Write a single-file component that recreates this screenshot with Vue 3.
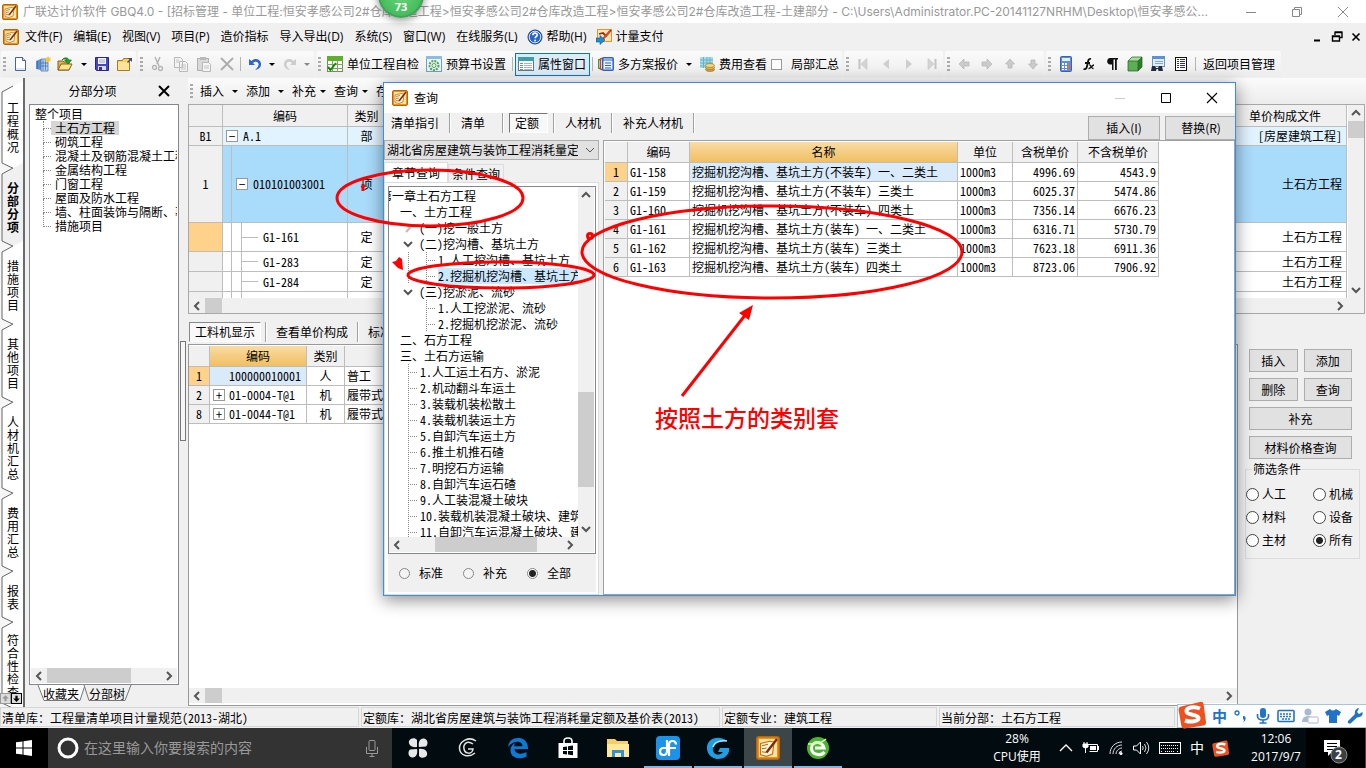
<script setup>
import { ref } from 'vue'

const menus = ['文件(F)', '编辑(E)', '视图(V)', '项目(P)', '造价指标', '导入导出(D)', '系统(S)', '窗口(W)', '在线服务(L)']

const sideTabs = [
  { t: '工程概况', h: 82 },
  { t: '分部分项', h: 78, on: true },
  { t: '措施项目', h: 78 },
  { t: '其他项目', h: 78 },
  { t: '人材机汇总', h: 91 },
  { t: '费用汇总', h: 78 },
  { t: '报表', h: 51 },
  { t: '符合性检查', h: 86 }
]

const projectTree = ['土石方工程', '砌筑工程', '混凝土及钢筋混凝土工程', '金属结构工程', '门窗工程', '屋面及防水工程', '墙、柱面装饰与隔断、幕墙', '措施项目']

const quotaItems = [
  { c: 'G1-161', k: 'tall', cur: true },
  { c: 'G1-283', k: 'mid' },
  { c: 'G1-284', k: 'mid' }
]

const resources = [
  { n: 1, code: '100000010001', kind: '人', name: '普工', sel: true },
  { n: 2, code: '01-0004-T@1', kind: '机', name: '履带式单斗挖掘机', plus: true },
  { n: 8, code: '01-0044-T@1', kind: '机', name: '履带式推土机', plus: true }
]

const chapterTree = [
  { l: 'root', t: '第一章土石方工程' },
  { l: 'sec', t: '一、土方工程' },
  { l: 'sub', t: '(一)挖一般土方', a: 'closed' },
  { l: 'sub', t: '(二)挖沟槽、基坑土方', a: 'open' },
  { l: 'leaf2', t: '1.人工挖沟槽、基坑土方' },
  { l: 'leaf2', t: '2.挖掘机挖沟槽、基坑土方', sel: true },
  { l: 'sub', t: '(三)挖淤泥、流砂', a: 'open' },
  { l: 'leaf2', t: '1.人工挖淤泥、流砂', last: true },
  { l: 'leaf2', t: '2.挖掘机挖淤泥、流砂', last: true },
  { l: 'sec', t: '二、石方工程' },
  { l: 'sec', t: '三、土石方运输' },
  { l: 'leaf1', t: '1.人工运土石方、淤泥' },
  { l: 'leaf1', t: '2.机动翻斗车运土' },
  { l: 'leaf1', t: '3.装载机装松散土' },
  { l: 'leaf1', t: '4.装载机装运土方' },
  { l: 'leaf1', t: '5.自卸汽车运土方' },
  { l: 'leaf1', t: '6.推土机推石碴' },
  { l: 'leaf1', t: '7.明挖石方运输' },
  { l: 'leaf1', t: '8.自卸汽车运石碴' },
  { l: 'leaf1', t: '9.人工装混凝土破块' },
  { l: 'leaf1', t: '10.装载机装混凝土破块、建筑垃圾' },
  { l: 'leaf1', t: '11.自卸汽车运混凝土破块、建筑垃圾' }
]

const quotas = [
  ['G1-158', '挖掘机挖沟槽、基坑土方(不装车) 一、二类土', '4996.69', '4543.9'],
  ['G1-159', '挖掘机挖沟槽、基坑土方(不装车) 三类土', '6025.37', '5474.86'],
  ['G1-160', '挖掘机挖沟槽、基坑土方(不装车) 四类土', '7356.14', '6676.23'],
  ['G1-161', '挖掘机挖沟槽、基坑土方(装车) 一、二类土', '6316.71', '5730.79'],
  ['G1-162', '挖掘机挖沟槽、基坑土方(装车) 三类土', '7623.18', '6911.36'],
  ['G1-163', '挖掘机挖沟槽、基坑土方(装车) 四类土', '8723.06', '7906.92']
]

const filters = ['人工', '机械', '材料', '设备', '主材', '所有']
const filter = ref('所有')
const source = ref('全部')
const partial = ref(false)
</script>

<template>
  <div class="screen">
    <svg class="defs" width="0" height="0" aria-hidden="true">
      <symbol id="gbq" viewBox="0 0 16 16"><rect x=".5" y=".5" width="15" height="15" rx="1.5" fill="#e8921c" stroke="#b8640a" /><rect x="2" y="2" width="12" height="12" fill="#fbe3a0" /><path d="M3 5l6-1.500 3 .5-1 8-4 1.500-4-1z" fill="#fff6dc" stroke="#c87310" stroke-width=".8" /><path d="M4 6.500l4-1M4 8.500l3-.5M4 10.500l3 .5" stroke="#b46a10" stroke-width=".8" /><path d="M14 2L7 11" stroke="#7c2d08" stroke-width="1.600" /></symbol>
      <symbol id="new" viewBox="0 0 16 16"><path d="M3.500 1.500h7l3 3v10h-10z" fill="#fff" stroke="#4a6588" /><path d="M10.500 1.500v3h3" fill="#d5e2f2" stroke="#4a6588" /><path d="M4 12h9v2H4z" fill="#d9e8fa" /></symbol>
      <symbol id="book" viewBox="0 0 16 16"><path d="M1 5l5-2v11l-5-1z" fill="#5b8fcf" /><path d="M6 3h7v12H6z" fill="#b8d4f2" stroke="#3e6ba5" stroke-width=".7" /><path d="M8 4v10M10.500 4v10M6 7h7M6 10h7M2.500 5v8" stroke="#3e6ba5" stroke-width=".7" /><path d="M13 0l1 2 2-.5-1 2 1 2-2-.5-1 2-1-2-2 .5 1-2-1-2 2 .5z" fill="#fbc52c" /></symbol>
      <symbol id="open" viewBox="0 0 16 16"><path d="M1 5h5l1 1h5v8H1z" fill="#e0b54a" stroke="#80611a" /><path d="M1 14l3-6h11l-3 6z" fill="#ffe28a" stroke="#80611a" /><path d="M5 4c2-3 6-3 7 0h2.500L11 8 7.500 4H10C9 2.500 7 2.500 5 4z" fill="#25a12b" stroke="#0e6a14" stroke-width=".6" /></symbol>
      <symbol id="save" viewBox="0 0 16 16"><path d="M1.500 1.500h13v13h-12l-1-1z" fill="#4747c0" stroke="#28287c" /><path d="M4 2h8v6H4z" fill="#f3f5ff" /><path d="M5 4h6M5 6h6" stroke="#a7aad8" /><path d="M4 10h8v4H4z" fill="#d9dcf4" /><path d="M5 11h3v3H5z" fill="#33339a" /></symbol>
      <symbol id="folder" viewBox="0 0 16 16"><path d="M.5 4.500h5l1-2h6v12H.5z" fill="#f4cf6e" stroke="#a57c24" /><path d="M1 6h11v8H1z" fill="#fce39a" /><path d="M11 2h4v4l-1.500-1.500L11 7l-1-1 2.500-2.500z" fill="#39507a" /></symbol>
      <symbol id="cut" viewBox="0 0 16 16"><path d="M5 1l4 9M10 1L7 8" stroke="#b4b4b4" stroke-width="1.500" fill="none" /><circle cx="4.500" cy="11.500" r="2" fill="none" stroke="#b4b4b4" stroke-width="1.300" /><circle cx="10.500" cy="12.500" r="2" fill="none" stroke="#b4b4b4" stroke-width="1.300" /></symbol>
      <symbol id="copy" viewBox="0 0 16 16"><path d="M1.500 1.500h6l2 2v8h-8zM6.500 5.500h6l2 2v8h-8z" fill="#f3f3f3" stroke="#b8b8b8" /><path d="M8 9h5M8 11h5M8 13h5M3 4h3M3 6h3" stroke="#c4c4c4" /></symbol>
      <symbol id="paste" viewBox="0 0 16 16"><rect x="1.500" y="2.500" width="11" height="12" fill="#d9d9d9" stroke="#b1b1b1" /><rect x="4" y="1" width="6" height="3" fill="#b9b9b9" /><path d="M6.500 6.500h6l2 2v7h-8z" fill="#f5f5f5" stroke="#b8b8b8" /><path d="M8 10h5M8 12h5" stroke="#c4c4c4" /></symbol>
      <symbol id="del" viewBox="0 0 16 16"><path d="M2 2l12 12M14 2L2 14" stroke="#acacac" stroke-width="1.800" /></symbol>
      <symbol id="undo" viewBox="0 0 16 16"><path d="M2 3v6h6L6 7c3-2.500 6-.5 5.500 2S9 13 8 14c4-.5 6.500-3.500 6-6.500C13.300 3 8 1.500 4.500 5z" fill="#2f66cf" /></symbol>
      <symbol id="redo" viewBox="0 0 16 16"><path d="M14 3v6H8l2-2c-3-2.500-6-.5-5.500 2S7 13 8 14c-4-.5-6.500-3.500-6-6.500C2.700 3 8 1.500 11.500 5z" fill="#cdcdcd" /></symbol>
      <symbol id="check" viewBox="0 0 16 16"><rect x=".5" y=".5" width="15" height="15" fill="#fff" stroke="#6c8f4c" /><path d="M0 0h16v5H0z" fill="#5fae2d" /><path d="M5.500 5v11M10.500 5v11M0 8.500h16M0 12.500h16" stroke="#7aa85c" /><path d="M1 11l2.500 3L9 7" fill="none" stroke="#17860e" stroke-width="2" /></symbol>
      <symbol id="gear" viewBox="0 0 16 16"><rect x=".5" y=".5" width="15" height="15" fill="#e9f4ee" stroke="#6f9fc9" /><path d="M0 0h16v3H0z" fill="#8fbbe0" /><circle cx="8" cy="9.500" r="4.500" fill="none" stroke="#51a35c" stroke-width="2" stroke-dasharray="2 1" /><circle cx="8" cy="9.500" r="2" fill="none" stroke="#51a35c" /></symbol>
      <symbol id="prop" viewBox="0 0 16 16"><rect x=".5" y="1.500" width="15" height="13" fill="#fff" stroke="#5b7b86" /><path d="M0 1h16v4H0z" fill="#3ba1a8" /><path d="M2 7.500h3M2 9.500h3M2 11.500h3M2 13.500h3" stroke="#6a9d6c" /><path d="M6 7.500h8M6 9.500h8M6 11.500h8M6 13.500h8" stroke="#a9b6b9" /></symbol>
      <symbol id="multi" viewBox="0 0 16 16"><rect x=".5" y="3.500" width="6" height="9" rx="1" fill="#fff" stroke="#2f9b3b" stroke-width="1.500" /><rect x="2.500" y="2.500" width="6" height="11" rx="1" fill="#fff" stroke="#d23d2a" stroke-width="1.500" /><rect x="4.700" y="1.700" width="10.500" height="12.500" rx="1" fill="#eef4ff" stroke="#2c62c4" stroke-width="1.500" /><path d="M5 4h10M7 7h6M7 9.500h6M7 12h6" stroke="#2c62c4" stroke-width="1.200" /></symbol>
      <symbol id="cost" viewBox="0 0 16 16"><path d="M1 1h13v11H1z" fill="#a8dce8" /><path d="M1 4h13M1 7h13M1 10h13M4.500 1v11M8 1v11M11 1v11" stroke="#63b3cb" /><ellipse cx="11" cy="13.500" rx="4.500" ry="2" fill="#d9a53c" stroke="#966b18" stroke-width=".6" /><ellipse cx="11" cy="11.500" rx="4.500" ry="2" fill="#e7ba56" stroke="#966b18" stroke-width=".6" /><ellipse cx="11" cy="9.500" rx="4.500" ry="2" fill="#f4d583" stroke="#966b18" stroke-width=".6" /></symbol>
      <symbol id="first" viewBox="0 0 16 16"><path d="M4.500 3v10" stroke="#c3c3c3" stroke-width="2" /><path d="M12 2.500v11L6 8z" fill="#d4d4d4" stroke="#c3c3c3" stroke-width=".6" /></symbol>
      <symbol id="prev" viewBox="0 0 16 16"><path d="M11 3v10L5 8z" fill="#cecece" /></symbol>
      <symbol id="next" viewBox="0 0 16 16"><path d="M5 3v10l6-5z" fill="#cecece" /></symbol>
      <symbol id="last" viewBox="0 0 16 16"><path d="M11.500 3v10" stroke="#c3c3c3" stroke-width="2" /><path d="M4 2.500v11L10 8z" fill="#d4d4d4" stroke="#c3c3c3" stroke-width=".6" /></symbol>
      <symbol id="left" viewBox="0 0 16 16"><path d="M3 8l5-5v3h5v4H8v3z" fill="#cbcbcb" stroke="#b3b3b3" stroke-width=".7" /></symbol>
      <symbol id="right" viewBox="0 0 16 16"><path d="M13 8L8 3v3H3v4h5v3z" fill="#cbcbcb" stroke="#b3b3b3" stroke-width=".7" /></symbol>
      <symbol id="up" viewBox="0 0 16 16"><path d="M8 3l4.500 5H10v4H6V8H3.500z" fill="#cbcbcb" stroke="#b3b3b3" stroke-width=".7" /></symbol>
      <symbol id="down" viewBox="0 0 16 16"><path d="M8 13l4.500-5H10V4H6v4H3.500z" fill="#cbcbcb" stroke="#b3b3b3" stroke-width=".7" /></symbol>
      <symbol id="calc" viewBox="0 0 16 16"><rect x="2.500" y=".5" width="11" height="15" rx="1" fill="#5f8ddb" stroke="#3c62aa" /><rect x="4" y="2" width="8" height="3" fill="#d7f1f5" /><path d="M4 7h2v2H4zM7 7h2v2H7zM4 10h2v2H4zM7 10h2v2H7zM4 13h2v1H4zM7 13h2v1H7z" fill="#fff" /><path d="M10 7h2v2h-2zM10 10h2v2h-2zM10 13h2v1h-2z" fill="#e46a4c" /></symbol>
      <symbol id="fx" viewBox="0 0 16 16"><path d="M10 3C7.500 2 7 5 6.500 8s-1 6-4 5M4 7h5" fill="none" stroke="#111" stroke-width="1.800" /><path d="M8 9c2-1 2 4 4.500 3.500M13 9c-2 0-3.500 4-5.500 3.500" fill="none" stroke="#111" stroke-width="1.400" /></symbol>
      <symbol id="para" viewBox="0 0 16 16"><path d="M6 2h8v1.500h-1.200V14H11V3.500H9.500V14H8V8.500C4 9 3 6.500 3.200 5 3.500 3 4.500 2 6 2z" fill="#111" /></symbol>
      <symbol id="cube" viewBox="0 0 16 16"><path d="M1 5l4-4h10l-4 4z" fill="#a7dc9d" /><path d="M1 5h10v10H1z" fill="#5bb054" /><path d="M11 5l4-4v10l-4 4z" fill="#2d7d2c" /><path d="M1 5l4-4h10v10l-4 4H1zM1 5h10v10M11 5l4-4" fill="none" stroke="#235f22" stroke-width=".7" /></symbol>
      <symbol id="find" viewBox="0 0 16 16"><rect x="2.500" y=".5" width="12" height="10" fill="#e4eefb" stroke="#6d94cf" /><path d="M2 0h13v3H2z" fill="#5d8fde" /><path d="M5 5.500h8M5 7.500h8" stroke="#86a6d4" /><path d="M1 15l1-5h3l1 2h2l1-2h3l1 5H8.500l-.5-2H6.500L6 15z" fill="#232c3a" /></symbol>
      <symbol id="list" viewBox="0 0 16 16"><rect x="2.500" y="1.500" width="11" height="13" fill="#fff" stroke="#111" /><path d="M4 3.500h2M4 5.500h2M4 7.500h2M4 9.500h2M4 11.500h2M7 3.500h5M7 5.500h5M7 7.500h5M7 9.500h5M7 11.500h5" stroke="#2b2b8b" /></symbol>
      <symbol id="help" viewBox="0 0 16 16"><circle cx="8" cy="8" r="7" fill="#2766d2" stroke="#143f92" /><circle cx="8" cy="8" r="5.800" fill="none" stroke="#dce9fc" /><path d="M5.800 6.300c0-3 4.500-2.800 4.500-.3 0 1.500-2.200 1.500-2.200 3.200" fill="none" stroke="#fff" stroke-width="1.600" /><circle cx="8.100" cy="11.500" r="1" fill="#fff" /></symbol>
      <symbol id="meter" viewBox="0 0 16 16"><rect x="1.500" y=".5" width="14" height="12" fill="#fbe5b8" stroke="#e6942a" /><path d="M3 5l4-1 3 3 5-6" fill="none" stroke="#8e2c17" stroke-width="1.800" /><path d="M7 10l7-8" stroke="#d94a28" stroke-width="2" /><path d="M0 9h4V6.500l5 4.500-5 4.500V13H0z" fill="#1a8fd4" stroke="#0c5c92" stroke-width=".6" /></symbol>
      <symbol id="caretL" viewBox="0 0 16 16"><path d="M10 4L6 8l4 4" fill="none" stroke="#555" stroke-width="2" /></symbol>
      <symbol id="caretR" viewBox="0 0 16 16"><path d="M6 4l4 4-4 4" fill="none" stroke="#555" stroke-width="2" /></symbol>
      <symbol id="caretU" viewBox="0 0 16 16"><path d="M4 10l4-4 4 4" fill="none" stroke="#555" stroke-width="2" /></symbol>
      <symbol id="caretD" viewBox="0 0 16 16"><path d="M4 6l4 4 4-4" fill="none" stroke="#555" stroke-width="2" /></symbol>
      <symbol id="sogou" viewBox="0 0 28 28"><path d="M3 5.500L22 1q3-.7 3.600 2.200L28 21q.4 3-2.600 3.500L7 27.600q-3 .4-3.600-2.600L.6 9q-.4-2.800 2.400-3.500z" fill="#f0501e" /><path d="M22 7.500C16 4.800 8 6.500 8.500 10.500c.4 4 11.500 2.500 12 6.500.4 3.500-8 4.500-13.500 2.500" fill="none" stroke="#fff" stroke-width="4" /></symbol>
    </svg>

    <header class="titlebar">
      <svg class="ic"><use href="#gbq" /></svg>
      <span class="caption">广联达计价软件 GBQ4.0 - [招标管理 - 单位工程:恒安孝感公司2#仓库改造工程&gt;恒安孝感公司2#仓库改造工程&gt;恒安孝感公司2#仓库改造工程-土建部分 - C:\Users\Administrator.PC-20141127NRHM\Desktop\恒安孝感公...</span>
      <div class="winbtns">
        <button aria-label="最小化"><svg class="ic"><path d="M3 8.500h10" stroke="#888" /></svg></button>
        <button aria-label="还原"><svg class="ic"><path d="M3.500 5.500h7v7h-7zM5.500 5.500v-2h7v7h-2" fill="none" stroke="#888" /></svg></button>
        <button aria-label="关闭"><svg class="ic"><path d="M3 3l10 10M13 3L3 13" stroke="#888" /></svg></button>
      </div>
    </header>

    <nav class="menubar">
      <svg class="ic"><use href="#gbq" /></svg>
      <button v-for="m in menus" :key="m">{{ m }}</button>
      <button class="wi"><svg class="ic"><use href="#help" /></svg>帮助(H)</button>
      <button class="wi"><svg class="ic"><use href="#meter" /></svg>计量支付</button>
      <div class="mdi">
        <svg class="ic"><path d="M4 11.500h6" stroke="#000" stroke-width="2" /></svg>
        <svg class="ic"><path d="M6 3.500h7v5h-3M6 3v3M5.500 3h8" fill="none" stroke="#000" stroke-width="1.400" /><path d="M3.500 7h7v5h-7zM3.500 7.500h7" fill="none" stroke="#000" stroke-width="1.400" /></svg>
        <svg class="ic"><path d="M4.500 4.500l7 7M11.500 4.500l-7 7" stroke="#000" stroke-width="1.600" /></svg>
      </div>
    </nav>

    <div class="toolbars">
      <div class="tb tb1"><i class="grip"></i>
        <button aria-label="新建"><svg class="ic"><use href="#new" /></svg></button>
        <button aria-label="新建项目"><svg class="ic"><use href="#book" /></svg></button>
        <button aria-label="打开"><svg class="ic"><use href="#open" /></svg></button><i class="dd"></i>
        <button aria-label="保存"><svg class="ic"><use href="#save" /></svg></button>
        <button aria-label="目录"><svg class="ic"><use href="#folder" /></svg></button>
      </div>
      <div class="tb tb2"><i class="grip"></i>
        <button aria-label="剪切"><svg class="ic"><use href="#cut" /></svg></button>
        <button aria-label="复制"><svg class="ic"><use href="#copy" /></svg></button>
        <button aria-label="粘贴"><svg class="ic"><use href="#paste" /></svg></button>
        <button aria-label="删除"><svg class="ic"><use href="#del" /></svg></button><i class="bar"></i>
        <button aria-label="撤销"><svg class="ic"><use href="#undo" /></svg></button><i class="dd"></i>
        <button aria-label="恢复"><svg class="ic"><use href="#redo" /></svg></button><i class="dd dim"></i>
      </div>
      <div class="tb tb3"><i class="grip"></i>
        <button class="txt"><svg class="ic"><use href="#check" /></svg>单位工程自检</button>
        <button class="txt"><svg class="ic"><use href="#gear" /></svg>预算书设置</button><i class="bar"></i>
        <button class="txt on"><svg class="ic"><use href="#prop" /></svg>属性窗口</button><i class="bar"></i>
        <button class="txt"><svg class="ic"><use href="#multi" /></svg>多方案报价</button><i class="dd"></i>
        <button class="txt"><svg class="ic"><use href="#cost" /></svg>费用查看</button>
        <label class="chk"><input v-model="partial" type="checkbox" />局部汇总</label>
      </div>
      <div class="tb tb4"><i class="grip"></i>
        <button v-for="i in ['first', 'prev', 'next', 'last']" :key="i" :aria-label="i"><svg class="ic"><use :href="'#' + i" /></svg></button>
      </div>
      <div class="tb tb4"><i class="grip"></i>
        <button v-for="i in ['left', 'right', 'up', 'down']" :key="i" :aria-label="i"><svg class="ic"><use :href="'#' + i" /></svg></button>
      </div>
      <div class="tb tb6"><i class="grip"></i>
        <button v-for="i in ['calc', 'fx', 'para', 'cube', 'find', 'list']" :key="i" :aria-label="i"><svg class="ic"><use :href="'#' + i" /></svg></button>
        <i class="bar"></i><button class="txt">返回项目管理</button>
      </div>
    </div>

    <main class="work">
      <aside class="sidetabs">
        <button v-for="s in sideTabs" :key="s.t" :class="{ on: s.on }" :style="{ height: s.h + 'px' }">
          <svg class="shape" width="24" :height="s.h">
            <path :d="`M23 -5L2 6V${s.h - 5}L23 ${s.h + 5}z`" :fill="s.on ? '#f0f0f0' : '#fff'" />
            <path :d="`M13 0L2 6V${s.h - 5}L23 ${s.h + 5}`" fill="none" stroke="#666" />
          </svg>
          <span>{{ s.t }}</span>
        </button>
        <div class="pager">
          <svg viewBox="0 0 16 16"><path d="M8 2l6 6h-4v5H6V8H2z" fill="#999" /></svg>
          <svg viewBox="0 0 16 16"><path d="M8 14l6-6h-4V3H6v5H2z" fill="#000" /></svg>
        </div>
      </aside>

      <section class="parts">
        <div class="parthead"><h2>分部分项</h2><button aria-label="关闭面板"><svg class="ic"><path d="M3 3l10 10M13 3L3 13" stroke="#000" stroke-width="2" /></svg></button></div>
        <div class="partbox">
          <ul class="ptree"><li class="top">整个项目</li><li v-for="(p, i) in projectTree" :key="p"><i></i><span :class="{ sel: i === 0 }">{{ p }}</span></li></ul>
          <div class="hs"><svg class="ic"><use href="#caretL" /></svg><div class="track"><i class="thumb t84"></i></div><svg class="ic"><use href="#caretR" /></svg></div>
        </div>
        <div class="parttabs">
          <button><svg class="trap" width="48" height="17"><path d="M1 0l6 15.500h36L48 0" fill="#fff" stroke="#777" /></svg><span>收藏夹</span></button>
          <button><svg class="trap" width="48" height="17"><path d="M1 0l5 15.500h36L48 0" fill="#f0f0f0" stroke="#777" /></svg><span>分部树</span></button>
        </div>
      </section>

      <section class="content">
        <div class="gridbar"><i class="grip"></i><template v-for="b in ['插入', '添加', '补充', '查询']" :key="b"><button>{{ b }}</button><i class="dd"></i></template><button>存档</button><i class="dd"></i></div>

        <div class="bill">
          <div class="billrow">
            <div class="billwrap">
              <table class="grid billgrid">
                <colgroup><col class="c34" /><col class="c125" /><col class="c50" /><col /><col class="c122" /></colgroup>
                <thead><tr><th></th><th>编码</th><th>类别</th><th></th><th>单价构成文件</th></tr></thead>
                <tbody>
                  <tr class="r19 pale"><td class="hd">B1</td><td><div class="node"><i class="pm">−</i><span>A.1</span></div></td><td class="mid">部</td><td></td><td class="rt">[房屋建筑工程]</td></tr>
                  <tr class="r77 blue"><td class="hd">1</td><td><div class="node two"><i class="line"></i><i class="pm">−</i><span>010101003001</span></div></td><td class="mid">项</td><td></td><td class="rt">土石方工程</td></tr>
                  <tr v-for="q in quotaItems" :key="q.c" :class="q.k"><td class="hd" :class="{ cur: q.cur }"></td><td><div class="node three"><i class="line"></i><i class="stub"></i><span>{{ q.c }}</span></div></td><td class="mid">定</td><td></td><td class="rt">土石方工程</td></tr>
                  <tr class="tail"><td class="hd"></td><td><div class="node three"><i class="line"></i><i class="stub"></i></div></td><td></td><td></td><td></td></tr>
                </tbody>
              </table>
            </div>
            <div class="vs"><svg class="ic"><use href="#caretU" /></svg><i class="vthumb"></i><svg class="ic end"><use href="#caretD" /></svg></div>
          </div>
          <div class="hs padr"><svg class="ic"><use href="#caretL" /></svg><div class="track"><i class="thumb t17"></i></div><svg class="ic"><use href="#caretR" /></svg></div>
        </div>

        <div class="lower">
          <div class="lowleft">
            <div class="ptabs"><button class="on">工料机显示</button><i></i><button>查看单价构成</button><i></i><button>标准换算</button></div>
            <div class="resbox">
              <div class="reswrap">
                <table class="grid resgrid">
                  <colgroup><col class="c21" /><col class="c97" /><col class="c38" /><col class="c300" /></colgroup>
                  <thead><tr><th></th><th class="gold">编码</th><th>类别</th><th>名称</th></tr></thead>
                  <tbody>
                    <tr v-for="r in resources" :key="r.n"><td class="hd" :class="{ cur: r.sel }">{{ r.n }}</td><td :class="{ pick: r.sel }"><div class="res"><i v-if="r.plus" class="pm">+</i><span>{{ r.code }}</span></div></td><td class="mid">{{ r.kind }}</td><td>{{ r.name }}</td></tr>
                  </tbody>
                </table>
              </div>
              <div class="hs"><svg class="ic"><use href="#caretL" /></svg><div class="track"><i class="thumb t17"></i></div><svg class="ic"><use href="#caretR" /></svg></div>
            </div>
          </div>
          <aside class="ops">
            <div class="pair"><button>插入</button><button>添加</button></div>
            <div class="pair"><button>删除</button><button>查询</button></div>
            <button>补充</button>
            <button>材料价格查询</button>
            <fieldset><legend>筛选条件</legend>
              <label v-for="f in filters" :key="f"><input v-model="filter" type="radio" name="filter" :value="f" />{{ f }}</label>
            </fieldset>
          </aside>
        </div>
      </section>
      <i class="splitter"></i>
    </main>

    <footer class="status">
      <span class="s1">清单库：工程量清单项目计量规范(2013-湖北)</span>
      <span class="s1">定额库：湖北省房屋建筑与装饰工程消耗量定额及基价表(2013)</span>
      <span class="s2">定额专业：建筑工程</span>
      <span class="s3">当前分部：土石方工程</span>
      <span class="s4">计</span>
    </footer>

    <div class="taskbar">
      <button class="start" aria-label="开始"><svg width="16" height="16"><path d="M0 2.300l6.500-.9v6.100H0zM7.500 1.200L16 0v7.500H7.500zM0 8.500h6.500v6.100L0 13.700zM7.500 8.500H16V16l-8.500-1.200z" fill="#fff" /></svg></button>
      <label class="search"><svg width="22" height="22"><circle cx="11" cy="11" r="9" fill="none" stroke="#fff" stroke-width="3" /></svg><input type="text" placeholder="在这里输入你要搜索的内容" aria-label="搜索" /><svg width="16" height="20"><rect x="5" y="2.500" width="6" height="10" rx="1" fill="none" stroke="#999" /><path d="M2.500 9v6.500h11V9M8 15.500V19M5.500 18.500h5" fill="none" stroke="#999" /></svg></label>
      <div class="apps">
        <button aria-label="风车"><svg width="24" height="24" viewBox="0 0 24 24"><path d="M11 11C5 12 2 8 3 5c1-3 6-4 8-1zM13 11c-1-5 1-9 5-8.500 4 .5 4.500 6 2 8zM13 13c6-1 9 3 8 6-1 3-6 4-8 1zM11 13c1 5-1 9-5 8.500-4-.5-4.500-6-2-8z" fill="#e6e8ea" /></svg></button>
        <button aria-label="浏览器"><svg width="24" height="24" viewBox="0 0 24 24"><path d="M20 5C13 0 3 5 3.500 12.500S13 22 19 17M17 8c-6-4-10 0-9 5s8 6 9 0h-5" fill="none" stroke="#e4e4e4" stroke-width="1.500" /></svg></button>
        <button aria-label="Edge"><svg width="24" height="24" viewBox="0 0 24 24"><path d="M2 11C3 4 8 1.500 13 2c6 .5 9 5 9 11H8.500c.5 5 7 6 12 3v4.500C14 24 4 22.500 4.500 13.500c.2-3 2.500-5.500 5-6.500-1 1.200-1.300 2.300-1.300 3.200h8.300C16.500 4 7 4 2 11z" fill="#0b7ad8" /></svg></button>
        <button aria-label="应用商店"><svg width="24" height="24" viewBox="0 0 24 24"><path d="M2.500 7h19v15h-19z" fill="#fff" /><path d="M8 7V5c0-4 8-4 8 0v2" fill="none" stroke="#fff" stroke-width="1.600" /><path d="M7 11l4-.6v3.500H7zM12 10.200l5-.7v4.400h-5zM7 15h4v3.500l-4-.6zM12 15h5v4.300l-5-.7z" fill="#02090c" /></svg></button>
        <button aria-label="文件资源管理器"><svg width="24" height="24" viewBox="0 0 24 24"><path d="M1 3h8l2 2h11v16H1z" fill="#f7cf61" /><path d="M1 8h22v13H1z" fill="#ffe79c" /><path d="M6 14h12v7h-3v-4H9v4H6z" fill="#2f92d8" /></svg></button>
        <button class="run" aria-label="计价"><svg width="24" height="24" viewBox="0 0 24 24"><rect width="24" height="24" rx="4" fill="#1c93e8" /><path d="M11 4v11q0 4-3.500 4T4 15.500 7.500 12H20M13 20V9q0-4 3.500-4T20 8.500" fill="none" stroke="#fff" stroke-width="2.200" /></svg></button>
        <button class="run" aria-label="云"><svg width="26" height="24" viewBox="0 0 26 24"><path d="M22 5C13-2 1 3 2 13c1 8 8 10 11 10 7 0 12-5 11-11h-9l-2 4h5c-4 5-11 2-10-4 1-5 8-7 14-7z" fill="#1d9fe5" /><path d="M22 5c-5-1-12 0-14 6" fill="none" stroke="#aee4ff" stroke-width="1.500" /></svg></button>
        <button class="run active" aria-label="广联达计价"><svg width="24" height="24"><use href="#gbq" /></svg></button>
        <button class="run" aria-label="360"><svg width="24" height="24" viewBox="0 0 24 24"><circle cx="12" cy="12" r="11" fill="#48b72b" /><path d="M18.500 16C15 20.500 5.500 19 5.500 12S16 4.500 18 12H9" fill="none" stroke="#fff" stroke-width="3" /><path d="M2 8c7 0 14-1 18-5" fill="none" stroke="#dff5b0" stroke-width="1.500" /></svg></button>
      </div>
      <div class="cpu"><span>28%</span><span>CPU使用</span></div>
      <div class="tray">
        <svg width="16" height="16"><path d="M2 11l6-6 6 6" fill="none" stroke="#fff" stroke-width="1.300" /></svg>
        <svg width="18" height="16"><path d="M5.500 4.500h10v7h-8M16.500 6v4" fill="none" stroke="#fff" /><path d="M8 6h6v4H8z" fill="#fff" /><path d="M1 4h5v3q-2.500 2-5 0zM2 2v2M5 2v2M3.500 8v5" stroke="#fff" fill="#fff" /></svg>
        <svg width="16" height="16"><path d="M2 14C2 7 7 2 14 2M5 14c0-5 4-9 9-9M8 14c0-3 3-6 6-6M11 14q0-3 3-3" fill="none" stroke="#ddd" /><circle cx="13" cy="13.500" r="1.500" fill="#fff" /></svg>
        <svg width="18" height="16"><path d="M1.500 6h3l4-4v12l-4-4h-3z" fill="none" stroke="#fff" /><path d="M10.500 6q1.500 2 0 4M12.500 4q3 4 0 8M14.500 2q4.500 6 0 12" fill="none" stroke="#ddd" /></svg>
        <svg width="24" height="16"><rect x="1.500" y="2.500" width="21" height="11" fill="none" stroke="#fff" /><path d="M3 5.500h18M3 8.500h18M3 11.500h2M7 11.500h10M19 11.500h2" stroke="#fff" stroke-dasharray="1 1" /></svg>
        <b>中</b>
        <svg width="17" height="17"><use href="#sogou" /></svg>
      </div>
      <div class="clock"><span>12:06</span><span>2017/9/7</span></div>
      <button class="notes" aria-label="通知"><svg width="26" height="26"><path d="M1 1h16v12H9l-4 4v-4H1z" fill="#fff" /><path d="M4 4.500h10M4 7.500h10M4 10.500h7" stroke="#000" /><circle cx="16" cy="16" r="8" fill="#3c4144" stroke="#8a8a8a" /></svg><em>2</em></button>
    </div>

    <div class="ime">
      <svg class="logo" width="28" height="28"><use href="#sogou" /></svg>
      <b>中</b>
      <svg width="16" height="16"><circle cx="4" cy="5" r="2" fill="none" stroke="#2173c9" stroke-width="1.300" /><path d="M10 8q4 0 2 5l-2 1q2-2 0-3z" fill="#2173c9" /></svg>
      <svg width="16" height="16"><rect x="5" y="0" width="6" height="10" rx="3" fill="#2173c9" /><path d="M2.500 6v2q0 4 5.500 4t5.500-4V6M8 12v3M4.500 15h7" fill="none" stroke="#2173c9" stroke-width="1.600" /></svg>
      <svg width="18" height="16"><rect x="1" y="2.500" width="16" height="11" rx="1" fill="none" stroke="#2173c9" stroke-width="1.600" /><path d="M3 6h12M3 8.500h12M5 11h8" stroke="#2173c9" stroke-width="1.500" stroke-dasharray="2 1" /></svg>
      <svg width="18" height="16"><circle cx="7" cy="4" r="3.500" fill="#a9b9d2" /><path d="M1 14q0-6 6-6t6 6z" fill="#a9b9d2" /><rect x="7" y="9" width="10" height="6" rx="1" fill="#fff" stroke="#a9b9d2" /></svg>
      <svg width="16" height="16"><path d="M5 1q3 3 6 0l5 3-2 4-2-1v8H4V7L2 8 0 4z" fill="#2173c9" /></svg>
      <svg width="16" height="16"><path d="M1 13l7-7q-1-4 3-6l1 .5L10 4l2 2 3.500-2q1 5-5.500 5.500L3.500 15.500Q0 16 1 13z" fill="#2173c9" /></svg>
    </div>

    <div class="ball">73</div>

    <section class="dialog" role="dialog" aria-label="查询">
      <header class="dtitle"><svg class="ic"><use href="#gbq" /></svg><span>查询</span>
        <div class="dbtns">
          <svg class="ic"><path d="M3 8.500h10" stroke="#ccc" /></svg>
          <svg class="ic"><path d="M3.500 3.500h9v9h-9z" fill="none" stroke="#000" /></svg>
          <svg class="ic"><path d="M3 3l10 10M13 3L3 13" stroke="#000" stroke-width="1.100" /></svg>
        </div>
      </header>
      <div class="dtabs">
        <button>清单指引</button><i></i><button>清单</button><i></i><button class="on">定额</button><i></i><button>人材机</button><i></i><button>补充人材机</button><i></i>
        <div class="acts"><button>插入(I)</button><button>替换(R)</button></div>
      </div>
      <div class="dbody">
        <div class="dleft">
          <div class="selwrap"><select aria-label="定额库"><option>湖北省房屋建筑与装饰工程消耗量定额及基价表</option></select><svg class="ic"><path d="M4 6l4 4 4-4" fill="none" stroke="#555" /></svg></div>
          <div class="ctabs"><button class="on">章节查询</button><button>条件查询</button></div>
          <div class="cpanel">
            <div class="ctree">
              <div class="ctop">
                <ul>
                  <li v-for="(n, i) in chapterTree" :key="i" :class="n.l">
                    <i v-if="n.l === 'sub'" class="arrow"><svg v-if="n.a === 'open'" width="16" height="16"><use href="#caretD" /></svg><svg v-else width="16" height="16"><path d="M6 4l4 4-4 4" fill="none" stroke="#bbb" stroke-width="2" /></svg></i>
                    <i v-if="n.l === 'leaf2'" class="g" :class="{ none: n.last }"></i>
                    <i v-if="n.l === 'leaf2' || n.l === 'leaf1'" class="g s"></i>
                    <span :class="{ sel: n.sel }">{{ n.t }}</span>
                  </li>
                </ul>
                <div class="vs"><svg class="ic"><use href="#caretU" /></svg><i class="vgap"></i><i class="vthumb long"></i><svg class="ic end"><use href="#caretD" /></svg></div>
              </div>
              <div class="hs padr"><svg class="ic"><use href="#caretL" /></svg><div class="track pad"><i class="thumb t102"></i></div><svg class="ic"><use href="#caretR" /></svg></div>
            </div>
            <div class="src"><label v-for="s in ['标准', '补充', '全部']" :key="s"><input v-model="source" type="radio" name="source" :value="s" />{{ s }}</label></div>
          </div>
        </div>
        <div class="dright">
          <table class="grid qgrid">
            <colgroup><col class="c23" /><col class="c62" /><col class="c268" /><col class="c55" /><col class="c65" /><col class="c81" /></colgroup>
            <thead><tr><th></th><th>编码</th><th class="gold">名称</th><th>单位</th><th>含税单价</th><th>不含税单价</th></tr></thead>
            <tbody>
              <tr v-for="(q, i) in quotas" :key="q[0]"><td class="hd" :class="{ cur: i === 0 }">{{ i + 1 }}</td><td>{{ q[0] }}</td><td :class="{ pick: i === 0 }">{{ q[1] }}</td><td>1000m3</td><td class="rt">{{ q[2] }}</td><td class="rt">{{ q[3] }}</td></tr>
            </tbody>
          </table>
        </div>
      </div>
    </section>

    <svg class="ink" width="1366" height="768" aria-hidden="true">
      <g fill="none" stroke="#f00" stroke-width="3">
        <ellipse cx="430" cy="198" rx="93" ry="28" />
        <ellipse cx="501" cy="275" rx="93" ry="13" />
        <ellipse cx="772" cy="252" rx="190" ry="46" />
        <circle cx="590" cy="236" r="2.500" />
        <path d="M363 184v7M682 396l64-82" />
      </g>
      <path d="M753 305l-4 15-10-7zM392 262l4-1 3-4 3 2 1 11-5-2z" fill="#f00" />
    </svg>
    <p class="note">按照土方的类别套</p>
  </div>
</template>

<style>
html, body, #app { height: 100%; margin: 0; }
</style>

<style scoped>
* { box-sizing: border-box; }
.screen { position: relative; display: flex; flex-direction: column; height: 100vh; overflow: hidden; background: #f0f0f0; color: #000; font: 12px/16px "Noto Sans Mono CJK SC", "Noto Sans CJK SC", sans-serif; white-space: nowrap; }
.defs { position: absolute; }
button { font: inherit; color: inherit; background: none; border: 0; padding: 0; margin: 0; white-space: nowrap; }
input, select { font: inherit; margin: 0; }
svg { flex: none; display: block; }
.ic { width: 16px; height: 16px; }
i { font-style: normal; flex: none; }
ul { list-style: none; margin: 0; padding: 0; }

.titlebar { display: flex; align-items: center; height: 23px; flex: none; background: #fff; padding-left: 2px; gap: 5px; color: #999; font-family: Inter, "Noto Sans CJK SC", sans-serif; }
.caption { flex: 1; overflow: hidden; }
.winbtns { display: flex; width: 138px; flex: none; }
.winbtns button { width: 46px; display: flex; justify-content: center; }
.menubar { display: flex; align-items: center; height: 27px; flex: none; padding-left: 3px; gap: 11px; font-family: "Open Sans", "Noto Sans CJK SC", sans-serif; }
.menubar > .ic { margin-right: -5px; }
.wi { display: flex; align-items: center; gap: 4px; }
.menubar .wi { margin-left: -2px; }
.mdi { display: flex; margin-left: auto; gap: 3px; padding-right: 2px; }

.toolbars { display: flex; gap: 2px; height: 28px; flex: none; padding: 1px 0 1px 1px; font-family: "Noto Sans CJK SC", sans-serif; }
.tb { display: flex; align-items: center; border-radius: 2px; background: linear-gradient(#fbfbfb, #ececec); padding-left: 2px; overflow: hidden; }
.tb button { display: flex; align-items: center; justify-content: center; width: 23px; height: 24px; gap: 4px; }
.tb .txt { width: auto; padding: 0 4px; }
.tb .on { border: 1px solid #0a74cc; background: #dcebf8; height: 23px; padding: 0 3px 0 2px; }
.tb1 { width: 135px; } .tb2 { width: 176px; } .tb3 { width: 526px; } .tb4 { width: 99px; } .tb6 { width: 235px; }
.tb3 .txt { padding: 0 4px 0 3px; } .tb3 .txt.on { padding: 0 3px 0 2px; }
.tb6 .bar { margin: 0 3px; }
.grip { width: 3px; height: 14px; margin-right: 3px; background: repeating-linear-gradient(#aaa 0 2px, transparent 2px 4px); }
.bar { width: 1px; height: 14px; background: #b5b5b5; margin: 0 2px; }
.dd { width: 0; height: 0; border: 3px solid transparent; border-top-color: #000; border-bottom: 0; margin: 0 4px; }
.tb2 .dd { margin: 0 3px; }
.dim { border-top-color: #888; }
.chk { display: flex; align-items: center; gap: 9px; }
.chk input { appearance: none; width: 11px; height: 11px; border: 1px solid #999; background: #fff; }

.work { position: relative; display: flex; flex: 1; min-height: 0; }
.sidetabs { position: relative; width: 25px; flex: none; border-right: 2px solid #6b6b6b; padding-top: 8px; overflow: hidden; background: #f6f6f6; }
.sidetabs > button { position: relative; display: flex; width: 24px; align-items: center; justify-content: center; line-height: 13px; font-size: 12px; }
.sidetabs span { position: relative; width: 13px; margin-left: 2px; white-space: normal; text-align: center; }
.sidetabs .on { font-weight: bold; }
.shape { position: absolute; left: 0; top: 0; overflow: visible; }
.pager { position: absolute; left: 0; bottom: 3px; display: flex; background: #ddd; }
.pager svg { width: 11px; height: 11px; border: 1px solid #000; }
.pager svg:first-child { border-color: #999; }

.parts { display: flex; flex-direction: column; width: 150px; margin-left: 4px; flex: none; }
.parthead { display: flex; align-items: center; height: 26px; flex: none; }
.parthead h2 { flex: 1; margin: 0; font: inherit; text-align: center; }
.parthead button { margin-right: 7px; }
.partbox { display: flex; flex-direction: column; flex: 1; min-height: 0; border: 1px solid #828790; background: #fff; padding: 1px; }
.ptree { flex: 1; overflow: hidden; line-height: 14px; padding: 1px 0 0 4px; }
.ptree li { display: flex; height: 14px; }
.ptree li i { width: 8px; margin-left: 8px; border-left: 1px dotted #888; border-bottom: 1px dotted #888; height: 8px; }
.ptree li + li + li i { height: 14px; margin-top: -6px; }
.ptree li span { padding: 0 4px; }
.ptree .sel { background: #d6d6d6; }
.hs { display: flex; align-items: center; height: 15px; flex: none; background: #f0f0f0; }
.track { flex: 1; height: 100%; display: flex; }
.thumb { background: #cdcdcd; height: 100%; }
.t84 { width: 84px; } .t17 { width: 17px; } .t102 { width: 102px; }
.padr { padding-right: 16px; }
.track.pad { padding-left: 30px; }
.parttabs { display: flex; height: 22px; flex: none; padding: 0 0 0 8px; }
.parttabs button { position: relative; width: 46px; height: 17px; }
.trap { position: absolute; left: 0; top: 0; overflow: visible; }
.parttabs span { position: relative; padding-left: 2px; }
.splitter { position: absolute; left: 180px; top: 263px; width: 6px; height: 100px; border: 1px solid #777; background: #f6f6f6; }

.content { display: flex; flex-direction: column; flex: 1; min-width: 0; margin-left: 9px; }
.gridbar { display: flex; align-items: center; height: 26px; flex: none; padding-left: 2px; font-family: "Noto Sans CJK SC", sans-serif; background: linear-gradient(#fbfbfb, #ececec); }
.gridbar .grip { margin-right: 7px; }
.gridbar .dd { margin: 0 8px 0 8px; }
.gridbar button:nth-of-type(n+3) + .dd { margin: 0 8px 0 4px; }
.bill { border: 1px solid #a8a8a8; margin-right: 1px; height: 210px; flex: none; background: #fff; display: flex; flex-direction: column; }
.billrow { display: flex; flex: 1; min-height: 0; }
.billwrap { flex: 1; overflow: hidden; }
.vs { display: flex; flex-direction: column; width: 16px; background: #f0f0f0; flex: none; }
.billrow .vs { margin-left: 1px; }
.vs .end { margin-top: auto; }
.vthumb { height: 17px; background: #cdcdcd; }
.vgap { height: 189px; flex: none; }
.long { height: 95px; }

.grid { border-collapse: separate; border-spacing: 0; table-layout: fixed; }
.grid th, .grid td { padding: 0 2px; border-right: 1px solid #bdbdbd; border-bottom: 1px solid #bdbdbd; font-weight: normal; overflow: hidden; line-height: 16px; }
.grid th { background: #f0f0f0; text-align: center; }
.grid .hd { background: #f0f0f0; text-align: center; padding: 0; }
.grid .cur { background: #ffd28b; }
.grid .gold { background: linear-gradient(#f9dca4, #f1bf62); }
.grid .pick { background: #d9eafa; }
.mid { text-align: center; }
.grid .rt { text-align: right; }
.billgrid { width: 100%; }
.billgrid .rt { padding-right: 4px; }
.billgrid td:nth-child(2) { padding: 0; height: inherit; }
.c34 { width: 34px; } .c125 { width: 125px; } .c50 { width: 38px; } .c122 { width: 123px; }
.c21 { width: 21px; } .c97 { width: 97px; } .c38 { width: 38px; } .c300 { width: 300px; }
.c23 { width: 23px; } .c62 { width: 62px; } .c268 { width: 268px; } .c55 { width: 55px; } .c65 { width: 65px; } .c81 { width: 81px; }
.billgrid th { height: 22px; }
.r19 td { height: 19px; } .r77 td { height: 77px; } .tall td { height: 29px; } .mid td { height: 20px; }
.pale td { background: #e1f3ff; } .blue td { background: #a9dbfb; }
.tail td { height: 20px; }
.node { display: flex; align-items: center; height: 18px; padding-left: 3px; }
.pm { display: inline-block; width: 12px; height: 12px; border: 1px solid #999; background: #fff; line-height: 10px; text-align: center; margin-right: 8px; font-size: 12px; }
.node .pm { margin-right: 5px; }
.node.two { height: 76px; padding-left: 8px; }
.node .line { width: 1px; align-self: stretch; background: #bdbdbd; }
.two .line { margin-right: 4px; }
.node.three { height: 28px; padding-left: 8px; }
.mid .node.three, .tail .node.three { height: 19px; }
.three .line { width: 11px; background: none; border: solid #bdbdbd; border-width: 0 1px; }
.three .stub { width: 16px; height: 1px; background: #bdbdbd; margin-right: 5px; }

.lower { display: flex; flex: 1; min-height: 0; }
.lowleft { display: flex; flex-direction: column; flex: 1; min-width: 0; }
.ptabs { display: flex; align-items: center; height: 30px; flex: none; padding: 7px 0 2px 1px; }
.ptabs button { padding: 0 5px; height: 20px; }
.ptabs .on { border: 1px solid #888; border-right-color: #fff; border-bottom-color: #fff; background: #f8f8f8; }
.ptabs i, .dtabs > i { width: 2px; height: 20px; background: #a0a0a0; border-right: 1px solid #fff; margin: 0 5px; }
.ptabs i { margin: 0 4px; }
.resbox { display: flex; flex-direction: column; flex: 1; border: 1px solid #999; background: #fff; min-height: 0; margin-bottom: 1px; }
.resbox .hs { margin-bottom: 2px; }
.reswrap { flex: 1; overflow: hidden; padding-top: 1px; }
.resgrid { width: 456px; }
.resgrid th { height: 21px; } .resgrid td { height: 19px; }
.res { display: flex; align-items: center; padding-left: 1px; }
.res .pm { margin-right: 4px; }
.pick .res { padding-left: 17px; }

.ops { display: flex; flex-direction: column; gap: 6px; width: 128px; flex: none; padding: 35px 14px 0 11px; }
.ops button { height: 23px; border: 1px solid #adadad; background: #e1e1e1; flex: none; }
.pair { display: flex; gap: 6px; }
.pair button { flex: 1; }
.ops fieldset { display: grid; grid-template-columns: 67px 1fr; row-gap: 7px; margin: -4px -8px 0 -4px; padding: 9px 0 10px 0; border: 1px solid #dcdcdc; min-width: 0; }
.ops legend { margin-left: 6px; padding: 0 1px; }
.ops label { display: flex; align-items: center; gap: 3px; }
.ops input { appearance: none; flex: none; width: 13px; height: 13px; border: 1px solid #444; border-radius: 50%; background: #fff; }
.ops input:checked, .src input:checked { background: radial-gradient(#222 0 3px, #fff 4px); }

.status { display: flex; gap: 2px; height: 21px; flex: none; line-height: 19px; }
.status span { border: 1px solid #d6d6d6; padding-left: 1px; overflow: hidden; height: 20px; }
.s1 { flex: 0 0 359px; } .s2 { flex: 0 0 215px; } .s3 { flex: 0 0 236px; } .s4 { flex: 1; }

.taskbar { display: flex; height: 40px; flex: none; background: #020c10; color: #fff; font-family: "Open Sans", "Noto Sans CJK SC", sans-serif; }
.start { display: flex; width: 48px; align-items: center; justify-content: center; background: #000; }
.search { display: flex; align-items: center; width: 344px; padding: 0 12px 0 9px; gap: 5px; background: #333; }
.search input { flex: 1; min-width: 0; background: none; border: 0; outline: 0; font-size: 14px; padding: 0; }
.search input::placeholder { color: #999; }
.apps { display: flex; flex: 1; padding-left: 2px; gap: 2px; }
.apps button { display: flex; align-items: center; justify-content: center; width: 48px; }
.apps .run { box-shadow: inset 0 -2px #76b9ed; }
.apps .active { background: #3c4649; }
.cpu, .clock { display: flex; flex-direction: column; align-items: center; justify-content: center; line-height: 18px; width: 70px; }
.tray { display: flex; align-items: center; gap: 8px; padding-left: 6px; width: 194px; }
.tray b { font-weight: normal; font-size: 14px; }
.cpu { flex: none; }
.clock { width: 60px; }
.notes { position: relative; width: 60px; display: flex; align-items: center; justify-content: center; background: #000; border-right: 1px solid #444; }
.notes svg { margin-top: 8px; }
.notes em { position: absolute; left: 29px; top: 19px; font: bold 12px/16px "Open Sans", sans-serif; }

.ime { position: absolute; right: 0; bottom: 40px; display: flex; align-items: center; gap: 6px; height: 24px; padding: 0 3px 0 2px; background: #fdfdfd; border: 1px solid #a9c4d9; border-right: 0; }
.ime .logo { margin: -3px 0 0 -2px; }
.ime b { color: #2173c9; font-size: 15px; }

.ball { position: absolute; left: 378px; top: -28px; width: 46px; height: 46px; border-radius: 50%; background: radial-gradient(#6bd47a, #34b350); border: 2px solid #44a05a; box-shadow: 0 2px 8px rgba(0, 0, 0, .45); color: #fff; text-align: center; font: bold 11px/16px "Open Sans", sans-serif; padding-top: 25px; }

.dialog { position: absolute; left: 383px; right: 130px; top: 82px; height: 514px; display: flex; flex-direction: column; border: 1px solid #3a8ee6; background: #f0f0f0; box-shadow: 0 4px 16px rgba(0, 0, 0, .45); }
.dtitle { display: flex; align-items: center; height: 30px; flex: none; background: #fff; padding-left: 8px; gap: 6px; }
.dbtns { display: flex; margin-left: auto; gap: 30px; padding-right: 15px; }
.dtabs { display: flex; align-items: flex-start; height: 27px; flex: none; padding-left: 2px; overflow: hidden; }
.dtabs > button { height: 20px; padding: 0 5px; }
.dtabs > button:nth-of-type(2) { padding: 0 12px 0 5px; }
.dtabs > .on { border: 1px solid #777; border-right-color: #fff; border-bottom-color: #fff; background: #f8f8f8; padding: 0 8px 0 5px; }
.acts { display: flex; gap: 5px; margin: 0 -2px 0 auto; padding-top: 3px; }
.acts button { width: 72px; height: 24px; border: 1px solid #adadad; background: #e1e1e1; font-family: "Noto Sans CJK SC", sans-serif; }
.dbody { display: flex; flex: 1; min-height: 0; }
.dleft { display: flex; flex-direction: column; width: 215px; flex: none; }
.selwrap { position: relative; height: 20px; flex: none; }
.selwrap select { appearance: none; width: 100%; height: 20px; border: 1px solid #adadad; background: #e1e1e1; padding: 0 20px 0 2px; border-radius: 0; text-overflow: clip; color: #000; }
.selwrap svg { position: absolute; right: 1px; top: 2px; }
.ctabs { display: flex; align-items: flex-end; height: 22px; flex: none; }
.ctabs button { height: 18px; padding: 0 3px; border: 1px solid #dcdcdc; border-bottom: 0; line-height: 16px; }
.ctabs .on { height: 20px; padding: 0 7px; background: #fff; }
.cpanel { display: flex; flex-direction: column; flex: 1; min-height: 0; background: #fff; border: 1px solid #dcdcdc; padding: 3px 2px 2px 3px; }
.ctree { display: flex; flex-direction: column; flex: 1; min-height: 0; border: 1px solid #828790; background: #fff; padding: 0 1px 1px 0; }
.ctop { display: flex; flex: 1; min-height: 0; }
.ctop ul { flex: 1; overflow: hidden; padding-top: 1px; }
.ctop li { display: flex; height: 16px; line-height: 16px; padding-left: 11px; }
.ctop .root { padding-left: 0; margin-left: -9px; }
.arrow { width: 19px; }
.g { width: 18px; height: 16px; background: repeating-linear-gradient(#888 0 1px, transparent 1px 2px) 8px 0 / 1px 16px no-repeat; }
.g.s { width: 20px; background: repeating-linear-gradient(#888 0 1px, transparent 1px 2px) 8px 0 / 1px 16px no-repeat, repeating-linear-gradient(90deg, #888 0 1px, transparent 1px 2px) 8px 8px / 9px 1px no-repeat; }
.g.none { background: none; }
.ctop .sel { background: #cce8ff; flex: 1; }
.src { display: flex; align-items: center; gap: 16px; height: 38px; flex: none; background: #f0f0f0; padding-left: 11px; }
.src label { display: flex; align-items: center; gap: 9px; width: 48px; }
.src input { appearance: none; flex: none; width: 11px; height: 11px; border: 1px solid #888; border-radius: 50%; background: #f4f4f4; }
.dright { flex: 1; margin-left: 4px; background: #fff; border: 1px solid #a0a0a0; padding: 1px; overflow: hidden; }
.qgrid { width: 554px; }
.qgrid th { height: 21px; } .qgrid td { height: 19px; }

.ink { position: absolute; left: 0; top: 0; pointer-events: none; }
.note { position: absolute; left: 655px; top: 401px; margin: 0; color: #f00; font: 500 23px/32px "Noto Sans CJK SC", sans-serif; }
</style>
